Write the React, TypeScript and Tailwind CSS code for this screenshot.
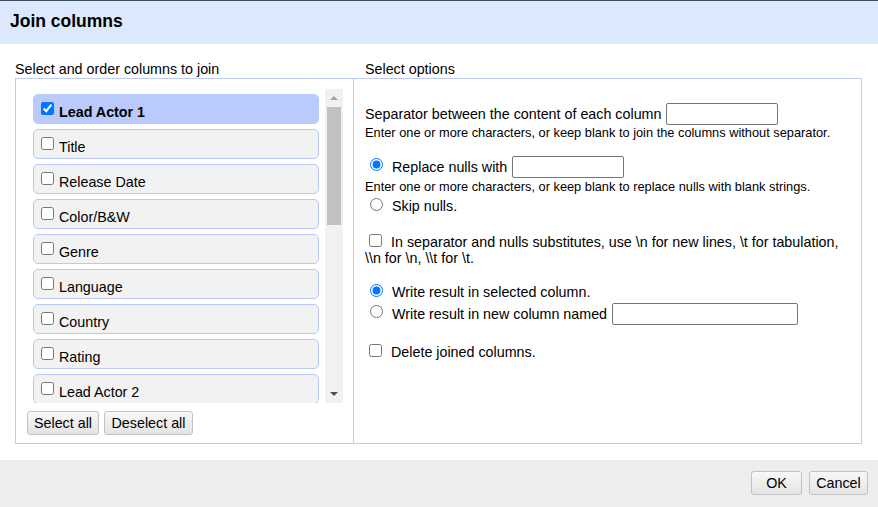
import React from 'react';

const columns = [
  'Lead Actor 1',
  'Title',
  'Release Date',
  'Color/B&W',
  'Genre',
  'Language',
  'Country',
  'Rating',
  'Lead Actor 2',
  'Lead Actor 3',
];

const btn =
  'h-[24px] px-0 whitespace-nowrap rounded-[3px] border border-[#c2c2c2] bg-gradient-to-b from-[#f8f8f8] to-[#e4e4e4] text-[14.3px] leading-[22px] text-black';

export default function App() {
  return (
    <div className="w-[878px] h-[507px] bg-white text-black font-['Liberation_Sans',Arial,sans-serif] overflow-hidden">
      {/* Header */}
      <div className="h-[44px] border-t border-[#3b4e64] bg-[#dce9fc] pl-[10px] pt-[10px]">
        <h1 className="text-[17.5px] leading-[20px] font-bold">Join columns</h1>
      </div>

      {/* Body */}
      <div className="h-[416px] pl-[15px] pr-[16px] pt-[17px]">
        <div className="flex text-[14.3px] leading-[16px] mb-[1px]">
          <div className="w-[350px]">Select and order columns to join</div>
          <div>Select options</div>
        </div>

        <div className="flex h-[366px] border border-[#bfcbf2]">
          {/* Left panel */}
          <div className="w-[338px] border-r border-[#bfcbf2] pl-[11px] pr-[10px] pt-[10px]">
            <div className="flex h-[314px]">
              <div className="flex-1 overflow-hidden pl-[6px] pr-[6px] pt-[5px] flex flex-col gap-[5px]">
                {columns.map((c, i) => (
                  <div
                    key={c}
                    className={
                      'shrink-0 h-[30px] rounded-[5px] border flex items-start pl-[7px] ' +
                      (i === 0 ? 'bg-[#bacafb] border-[#bacafb] font-bold' : 'bg-[#f2f2f2] border-[#bac8f7]')
                    }
                  >
                    <input type="checkbox" defaultChecked={i === 0} className="w-[13px] h-[13px] mt-[7px] mr-[5px]" />
                    <span className="text-[14.3px] leading-[16px] mt-[9px]">{c}</span>
                  </div>
                ))}
              </div>
              <div className="w-[18px] bg-[#f1f1f1] flex flex-col items-center">
                <div className="h-[18px] flex items-center justify-center">
                  <div className="w-0 h-0 border-l-[4px] border-r-[4px] border-b-[4px] border-l-transparent border-r-transparent border-b-[#a3a3a3]" />
                </div>
                <div className="w-[14px] h-[118px] bg-[#c1c1c1]" />
                <div className="flex-1" />
                <div className="h-[18px] flex items-center justify-center">
                  <div className="w-0 h-0 border-l-[4px] border-r-[4px] border-t-[4px] border-l-transparent border-r-transparent border-t-[#505050]" />
                </div>
              </div>
            </div>
            <div className="flex gap-[5px] mt-[8px]">
              <button className={btn + ' w-[72px]'}>Select all</button>
              <button className={btn + ' w-[89px]'}>Deselect all</button>
            </div>
          </div>

          {/* Right panel */}
          <div className="flex-1 pl-[11px] pt-[24px] text-[14.3px] leading-[16px]">
            <div className="h-[22px] flex items-center">
              <span>Separator between the content of each column</span>
              <input type="text" className="ml-[5px] w-[112px] h-[22px] border border-[#767676] rounded-[2px]" />
            </div>
            <div className="text-[12.8px] leading-[14px] mt-[1px]">
              Enter one or more characters, or keep blank to join the columns without separator.
            </div>

            <div className="h-[22px] flex items-center mt-[16px]">
              <input type="radio" name="nulls" defaultChecked className="w-[13px] h-[13px] ml-[5px] mr-[9px] mb-[6px]" />
              <span>Replace nulls with</span>
              <input type="text" className="ml-[5px] w-[112px] h-[22px] border border-[#767676] rounded-[2px]" />
            </div>
            <div className="text-[12.8px] leading-[14px] mt-[2px]">
              Enter one or more characters, or keep blank to replace nulls with blank strings.
            </div>
            <div className="h-[16px] flex items-center mt-[4px]">
              <input type="radio" name="nulls" className="w-[13px] h-[13px] ml-[5px] mr-[9px] mb-[3px]" />
              <span>Skip nulls.</span>
            </div>

            <p className="mt-[20px]">
              <input type="checkbox" className="w-[13px] h-[13px] ml-[4px] mr-[9px] mb-[2px]" />
              In separator and nulls substitutes, use \n for new lines, \t for tabulation,
              <br />
              \\n for \n, \\t for \t.
            </p>

            <div className="h-[16px] flex items-center mt-[18px]">
              <input type="radio" name="dest" defaultChecked className="w-[13px] h-[13px] ml-[5px] mr-[9px] mb-[3px]" />
              <span>Write result in selected column.</span>
            </div>
            <div className="h-[22px] flex items-center mt-[3px]">
              <input type="radio" name="dest" className="w-[13px] h-[13px] ml-[5px] mr-[9px] mb-[5px]" />
              <span>Write result in new column named</span>
              <input type="text" className="ml-[5px] w-[186px] h-[22px] border border-[#767676] rounded-[2px]" />
            </div>

            <div className="h-[16px] flex items-center mt-[19px]">
              <input type="checkbox" className="w-[13px] h-[13px] ml-[4px] mr-[9px] mb-[4px]" />
              <span>Delete joined columns.</span>
            </div>
          </div>
        </div>
      </div>

      {/* Footer */}
      <div className="h-[47px] bg-[#eeeeee] flex justify-end gap-[7px] pr-[10px] pt-[11px]">
        <button className={btn + ' w-[51px]'}>OK</button>
        <button className={btn + ' w-[59px]'}>Cancel</button>
      </div>
    </div>
  );
}
